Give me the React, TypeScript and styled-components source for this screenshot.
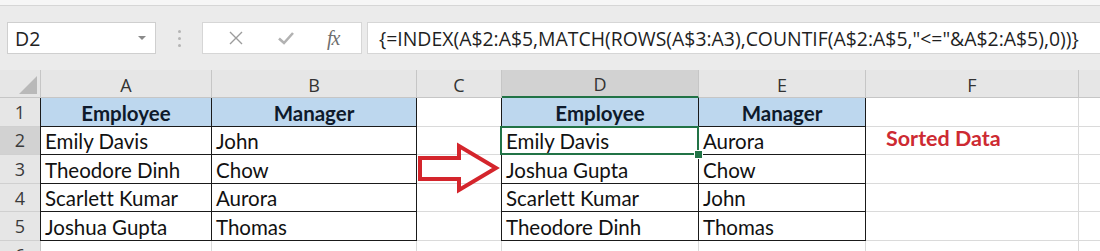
import styled, { createGlobalStyle, css } from 'styled-components';

const GlobalStyle = createGlobalStyle`
  html, body {
    margin: 0;
    padding: 0;
    background: #ebebeb;
    overflow: hidden;
  }
  * {
    box-sizing: border-box;
  }
`;

const COLUMN_WIDTHS = ['41px', '171px', '205px', '85px', '197px', '167px', '213px', '120px'];
// G is cut off at the window edge, so its letter is never visible
const COLUMN_LETTERS = ['A', 'B', 'C', 'D', 'E', 'F', ''];
const TABLE_COLUMNS = [0, 1, 3, 4];
const TABLE_LEFT_EDGES = [0, 3];
const SELECTED = { row: 2, col: 3 };

const ROWS: string[][] = [
  ['Employee', 'Manager', '', 'Employee', 'Manager', '', ''],
  ['Emily Davis', 'John', '', 'Emily Davis', 'Aurora', 'Sorted Data', ''],
  ['Theodore Dinh', 'Chow', '', 'Joshua Gupta', 'Chow', '', ''],
  ['Scarlett Kumar', 'Aurora', '', 'Scarlett Kumar', 'John', '', ''],
  ['Joshua Gupta', 'Thomas', '', 'Theodore Dinh', 'Thomas', '', ''],
  ['', '', '', '', '', '', ''],
];

const Page = styled.div`
  width: 1100px;
  height: 251px;
  display: flex;
  flex-direction: column;
  overflow: hidden;
  & > * {
    flex-shrink: 0;
  }
`;

const TopStrip = styled.div`
  height: 6px;
  background: #f6f6f6;
  border-bottom: 1px solid #d6d6d6;
`;

const FormulaRow = styled.div`
  height: 64px;
  display: flex;
  align-items: center;
  padding-left: 7px;
`;

const NameBox = styled.div`
  width: 149px;
  height: 32px;
  background: #fff;
  border: 1px solid #cfcfcf;
  display: flex;
  align-items: center;
  justify-content: space-between;
  padding: 0 9px 0 7px;
  font-family: 'Open Sans', 'Liberation Sans', sans-serif;
  font-size: 19.5px;
  color: #222;
`;

const Caret = styled.span`
  width: 0;
  height: 0;
  border-left: 4px solid transparent;
  border-right: 4px solid transparent;
  border-top: 4px solid #8a8a8a;
`;

const Grip = styled.div`
  width: 46px;
  display: flex;
  flex-direction: column;
  align-items: center;
  gap: 4px;
  span {
    width: 3px;
    height: 3px;
    border-radius: 50%;
    background: #b4b4b4;
  }
`;

const ButtonBox = styled.div`
  width: 160px;
  height: 32px;
  background: #fff;
  border: 1px solid #d6d6d6;
  display: flex;
  align-items: center;
  justify-content: space-around;
  padding: 0 6px 0 8px;
`;

const Fx = styled.span`
  font-family: 'Liberation Serif', serif;
  font-style: italic;
  font-size: 20px;
  color: #6f6f6f;
  letter-spacing: -1px;
`;

const FormulaInput = styled.div`
  flex: 1;
  height: 32px;
  margin-left: 5px;
  background: #fff;
  border: 1px solid #d6d6d6;
  border-right: none;
  display: flex;
  align-items: center;
  padding-left: 11px;
  font-family: 'Open Sans', 'Liberation Sans', sans-serif;
  font-size: 19.4px;
  color: #1f1f1f;
  white-space: nowrap;
  overflow: hidden;
`;

const Sheet = styled.div`
  position: relative;
  display: grid;
  grid-template-columns: ${COLUMN_WIDTHS.join(' ')};
  grid-template-rows: 28px repeat(6, 28.6px);
  background: #fff;
`;

const Corner = styled.div`
  background: #e6e6e6;
  border-right: 1px solid #c6c6c6;
  border-bottom: 1px solid #c6c6c6;
  position: relative;
  &::after {
    content: '';
    position: absolute;
    right: 3px;
    bottom: 3px;
    width: 0;
    height: 0;
    border-left: 18px solid transparent;
    border-bottom: 18px solid #b9b9b9;
  }
`;

const ColHeader = styled.div<{ $active?: boolean }>`
  display: flex;
  align-items: center;
  justify-content: center;
  background: ${({ $active }) => ($active ? '#d2d2d2' : '#e6e6e6')};
  border-right: 1px solid #c6c6c6;
  border-bottom: ${({ $active }) => ($active ? '2px solid #217346' : '1px solid #c6c6c6')};
  font-family: 'Open Sans', 'Liberation Sans', sans-serif;
  font-size: 18px;
  color: #333;
  padding-top: 2px;
`;

const RowHeader = styled.div<{ $active?: boolean }>`
  display: flex;
  align-items: center;
  justify-content: center;
  background: ${({ $active }) => ($active ? '#d2d2d2' : '#e6e6e6')};
  border-right: 1px solid #c6c6c6;
  border-bottom: 1px solid #d0d0d0;
  font-family: 'Open Sans', 'Liberation Sans', sans-serif;
  font-size: 18px;
  color: #3a3a3a;
`;

const Cell = styled.div<{
  $boxed?: boolean;
  $edge?: boolean;
  $head?: boolean;
  $note?: boolean;
  $selected?: boolean;
}>`
  position: relative;
  display: flex;
  align-items: flex-end;
  padding: 0 0 1px 4px;
  border-right: 1px solid #dadada;
  border-bottom: 1px solid #dadada;
  font-family: Lato, 'Liberation Sans', sans-serif;
  font-size: 20.5px;
  font-variant-ligatures: none;
  color: #111;
  white-space: nowrap;

  ${({ $boxed }) =>
    $boxed &&
    css`
      border-right-color: #1a1a1a;
      border-bottom-color: #1a1a1a;
    `}
  ${({ $edge }) =>
    $edge &&
    css`
      box-shadow: -1px 0 0 #1a1a1a;
    `}
  ${({ $head }) =>
    $head &&
    css`
      background: #bdd7ee;
      justify-content: center;
      font-weight: 700;
      color: #0e1a2b;
      padding-left: 0;
    `}
  ${({ $note }) =>
    $note &&
    css`
      padding-left: 20px;
      padding-bottom: 3px;
      font-size: 21.5px;
      font-weight: 700;
      color: #cd2a32;
    `}
  ${({ $selected }) =>
    $selected &&
    css`
      &::after {
        content: '';
        position: absolute;
        inset: -1px -1px -1px -2px;
        border: 2px solid #217346;
      }
      &::before {
        content: '';
        position: absolute;
        right: -5px;
        bottom: -5px;
        width: 7px;
        height: 7px;
        background: #217346;
        border: 1px solid #fff;
        z-index: 2;
      }
    `}
`;

const Arrow = styled.svg`
  position: absolute;
  left: 416px;
  top: 73px;
  overflow: visible;
`;

function CancelIcon() {
  return (
    <svg width='18' height='18' viewBox='0 0 18 18'>
      <path d='M3 3 L15 15 M15 3 L3 15' stroke='#9c9c9c' strokeWidth='1.4' fill='none' />
    </svg>
  );
}

function EnterIcon() {
  return (
    <svg width='20' height='18' viewBox='0 0 20 18'>
      <path d='M3 9.5 L8 14 L17 4' stroke='#b2b2b2' strokeWidth='2.6' fill='none' />
    </svg>
  );
}

export default function App() {
  return (
    <>
      <GlobalStyle />
      <Page>
        <TopStrip />
        <FormulaRow>
          <NameBox>
            D2
            <Caret />
          </NameBox>
          <Grip>
            <span />
            <span />
            <span />
          </Grip>
          <ButtonBox>
            <CancelIcon />
            <EnterIcon />
            <Fx>fx</Fx>
          </ButtonBox>
          <FormulaInput>
            {'{=INDEX(A$2:A$5,MATCH(ROWS(A$3:A3),COUNTIF(A$2:A$5,"<="&A$2:A$5),0))}'}
          </FormulaInput>
        </FormulaRow>
        <Sheet>
          <Corner />
          {COLUMN_LETTERS.map((letter, i) => (
            <ColHeader key={`col${i}`} $active={i === SELECTED.col}>
              {letter}
            </ColHeader>
          ))}
          {ROWS.map((row, r) => {
            const rowNumber = r + 1;
            const inTable = rowNumber <= 5;
            return [
              <RowHeader key={`h${rowNumber}`} $active={rowNumber === SELECTED.row}>
                {rowNumber}
              </RowHeader>,
              ...row.map((text, c) => {
                const boxed = inTable && TABLE_COLUMNS.includes(c);
                return (
                  <Cell
                    key={`${rowNumber}-${c}`}
                    $boxed={boxed}
                    $edge={boxed && TABLE_LEFT_EDGES.includes(c)}
                    $head={boxed && rowNumber === 1}
                    $note={text === 'Sorted Data'}
                    $selected={rowNumber === SELECTED.row && c === SELECTED.col}
                  >
                    {text}
                  </Cell>
                );
              }),
            ];
          })}
          <Arrow width='86' height='52' viewBox='0 0 86 52'>
            <polygon
              points='4,15 43,15 43,3 80,25 43,47 43,36 4,36'
              fill='none'
              stroke='#d4252c'
              strokeWidth='4'
              strokeLinejoin='miter'
            />
          </Arrow>
        </Sheet>
      </Page>
    </>
  );
}
